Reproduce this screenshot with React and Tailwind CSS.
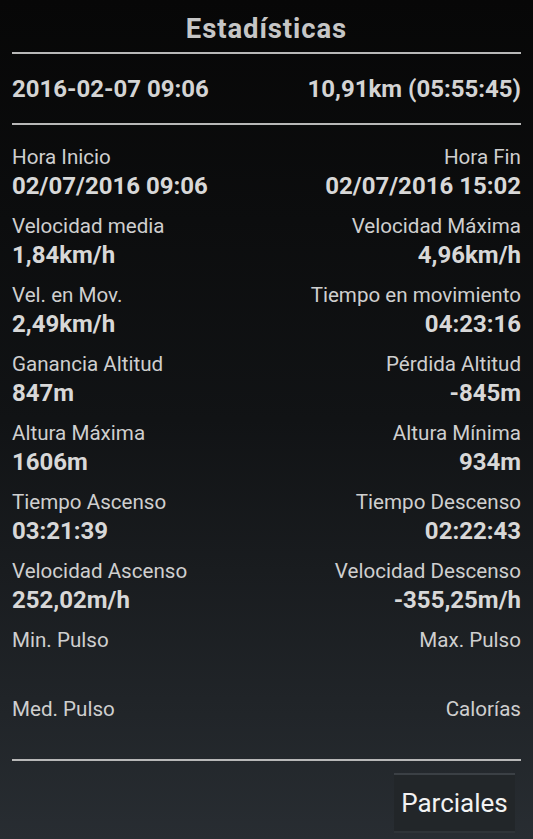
import React from 'react';

const stats = [
    ['Hora Inicio', '02/07/2016 09:06', 'Hora Fin', '02/07/2016 15:02'],
    ['Velocidad media', '1,84km/h', 'Velocidad Máxima', '4,96km/h'],
    ['Vel. en Mov.', '2,49km/h', 'Tiempo en movimiento', '04:23:16'],
    ['Ganancia Altitud', '847m', 'Pérdida Altitud', '-845m'],
    ['Altura Máxima', '1606m', 'Altura Mínima', '934m'],
    ['Tiempo Ascenso', '03:21:39', 'Tiempo Descenso', '02:22:43'],
    ['Velocidad Ascenso', '252,02m/h', 'Velocidad Descenso', '-355,25m/h'],
    ['Min. Pulso', '', 'Max. Pulso', ''],
    ['Med. Pulso', '', 'Calorías', ''],
];

const StatCell = ({ label, value, right }) => (
    <div className={right ? 'flex flex-col items-end' : 'flex flex-col items-start'}>
        <span className="text-[20.6px] leading-[28px] text-[#cfcfcf]">{label}</span>
        <span className="h-[30px] text-[24px] leading-[30px] font-bold text-[#d8d8d8]">{value}</span>
    </div>
);

export default function App() {
    return (
        <div
            className="min-h-[839px] w-full bg-linear-to-b from-[#070707] via-[#111315] to-[#282d32] px-3 flex flex-col"
            style={{ fontFamily: 'Roboto, "Noto Sans", sans-serif' }}
        >
            {/* Title */}
            <h1 className="h-[52px] pt-[6px] flex items-center justify-center text-[27.5px] tracking-[0.9px] font-bold text-[#c6c6c6]">
                Estadísticas
            </h1>
            <div className="h-[2px] bg-[#b8b8b8]" />

            {/* Summary */}
            <div className="h-[69px] flex items-center justify-between text-[24px] font-bold text-[#d4d4d4]">
                <span>2016-02-07 09:06</span>
                <span>10,91km (05:55:45)</span>
            </div>
            <div className="h-[2px] bg-[#b8b8b8]" />

            {/* Stats */}
            <div className="mt-[18px] flex flex-col">
                {stats.map(([l1, v1, l2, v2], i) => (
                    <div
                        key={l1}
                        className={i === stats.length - 1 ? 'flex justify-between pb-[6px]' : 'flex justify-between pb-[11px]'}
                    >
                        <StatCell label={l1} value={v1} />
                        <StatCell label={l2} value={v2} right />
                    </div>
                ))}
            </div>
            <div className="h-[2px] bg-[#b8b8b8]" />

            {/* Button */}
            <div className="mt-[12px] flex justify-end pr-[6px]">
                <button className="w-[121px] h-[60px] border-t-2 border-b-2 border-t-[#3b4045] border-b-[#2f3438] bg-[#222629] text-[26px] text-[#f2f2f2]">
                    Parciales
                </button>
            </div>
        </div>
    );
}
